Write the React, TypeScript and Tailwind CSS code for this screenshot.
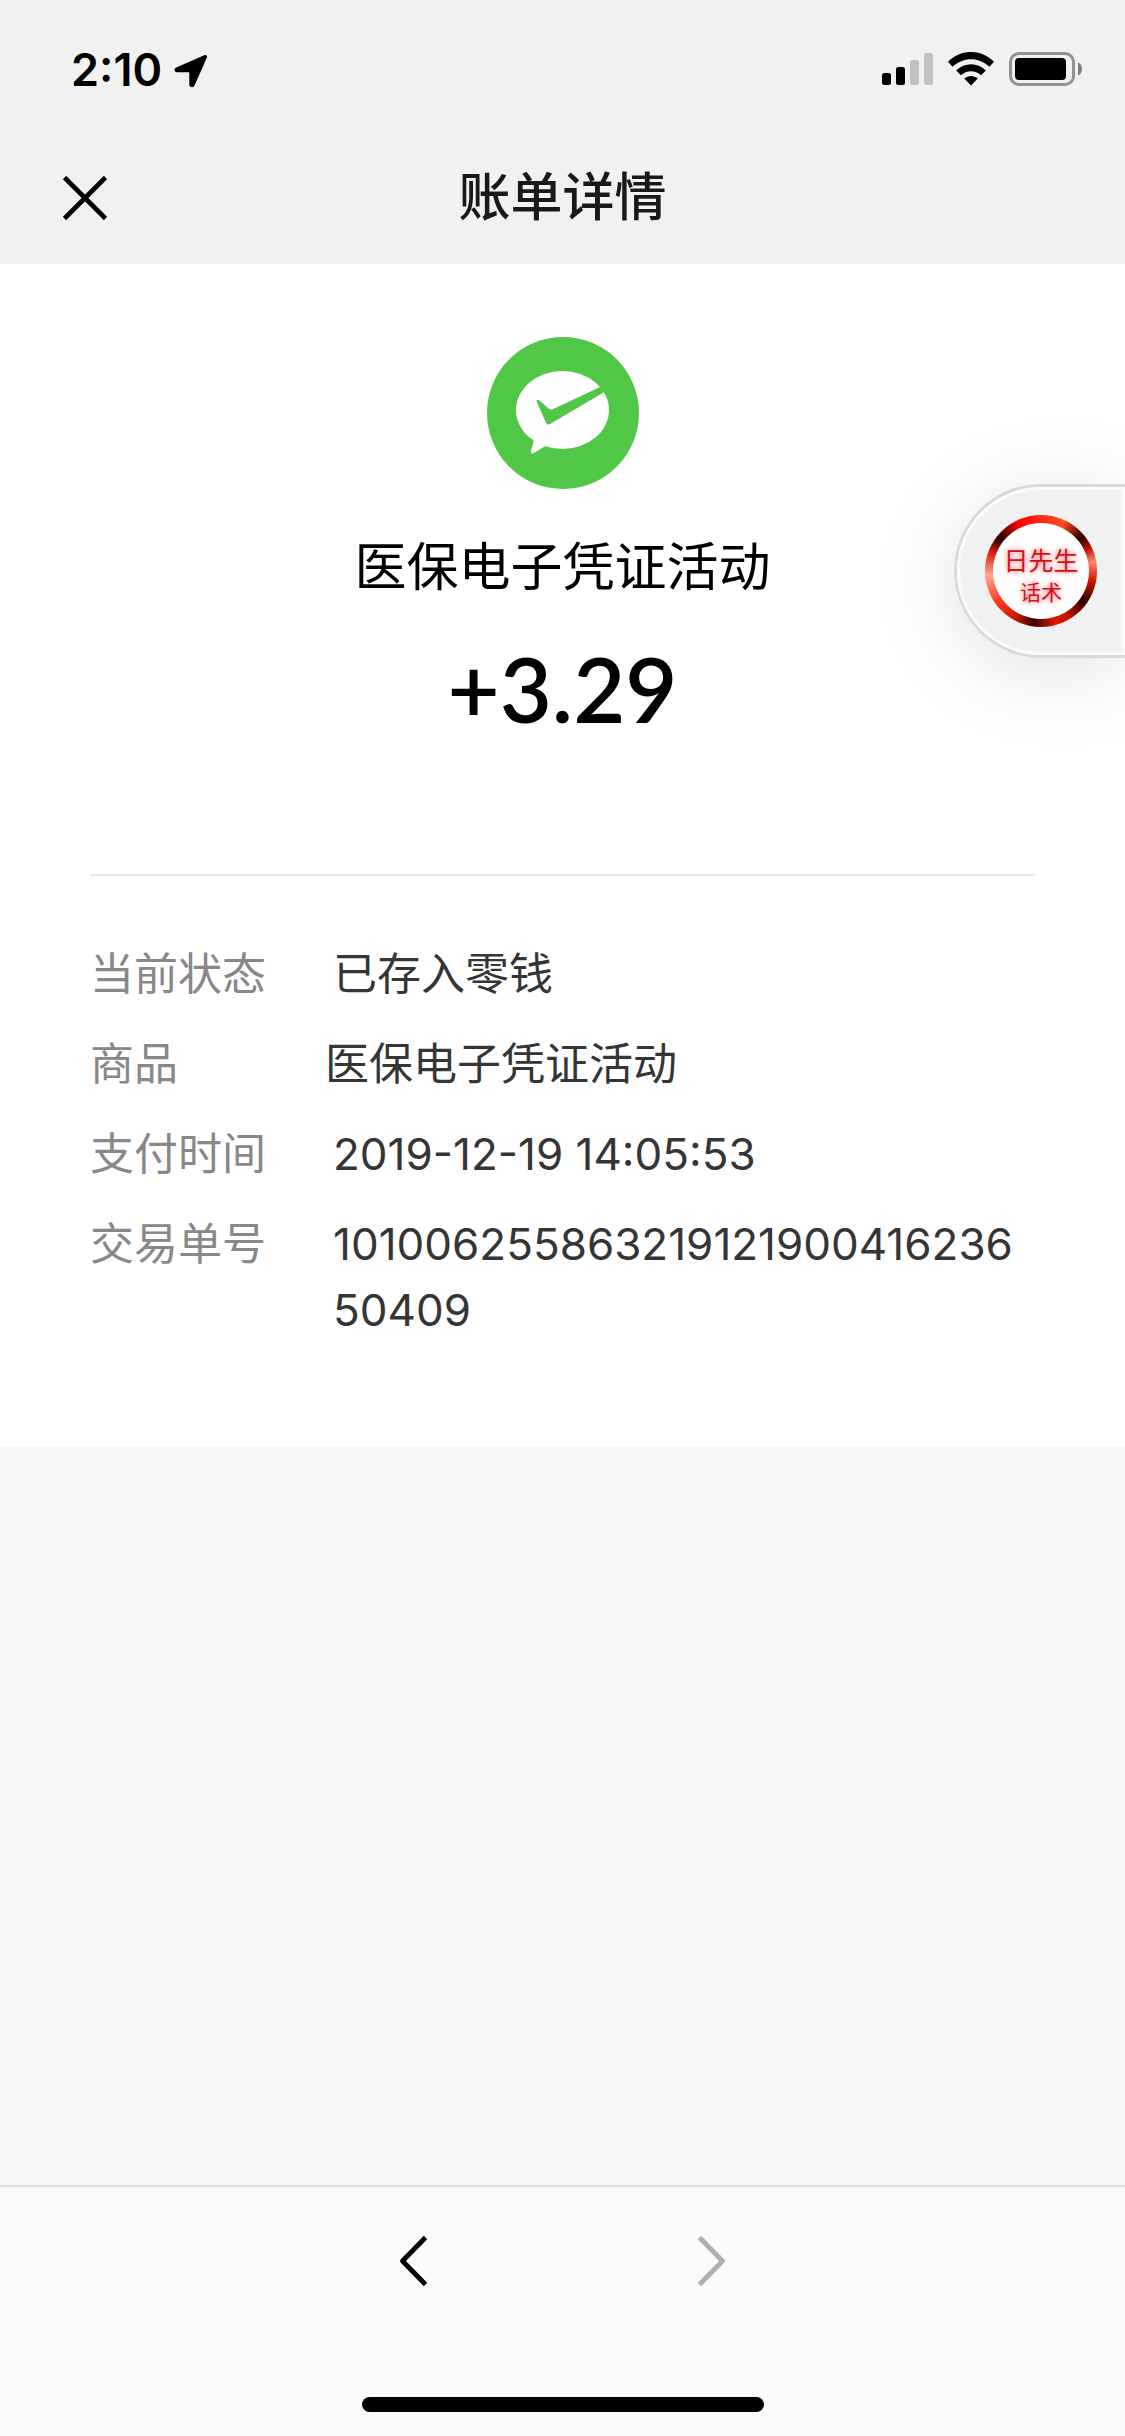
type BillRow = { label: string; value: string; tight?: boolean };

const rows: BillRow[] = [
  { label: "当前状态", value: "已存入零钱" },
  { label: "商品", value: "医保电子凭证活动", tight: true },
  { label: "支付时间", value: "2019-12-19 14:05:53" },
  { label: "交易单号", value: "10100625586321912190041623650409" },
];

function StatusBar() {
  return (
    <div className="flex h-[132px] items-center justify-between pt-1.5 pr-[42px] pl-[71px] text-black">
      <div className="flex items-center gap-3">
        <span className="text-[45px] leading-none font-semibold">2:10</span>
        <svg width="34" height="34" viewBox="0 0 34 34" className="mt-1">
          <path
            d="M2.200 13.600 30.200 1.200c1.900-.7 3.400.8 2.600 2.600L20.400 31.800c-1 2.200-5 1.700-5.100-1V18.200H3.200c-3.200-.1-3.600-3.400-1-4.600z"
            fill="currentColor"
          />
        </svg>
      </div>

      <div className="flex items-center gap-[15px]">
        {/* Signal */}
        <svg width="51" height="34" viewBox="0 0 51 34">
          <rect x="0" y="21" width="9" height="12" rx="2.5" />
          <rect x="14" y="15" width="9" height="18" rx="2.5" />
          <rect x="28" y="8" width="9" height="25" rx="2.5" fill="#c1c1c1" />
          <rect x="42" y="1" width="9" height="32" rx="2.5" fill="#c1c1c1" />
        </svg>
        {/* Wi-Fi */}
        <svg width="46" height="34" viewBox="0 0 46 34">
          <path d="M0 9.8C13-3.3 33-3.3 46 9.8l-4.6 4.9c-10.6-10-26.2-10-36.8 0z" />
          <path d="M8.2 18.4c8.4-8.2 21.200-8.200 29.600 0l-4.700 4.800c-5.800-5.400-14.400-5.400-20.200 0z" />
          <path d="M16.200 26.600c3.900-3.600 9.700-3.600 13.600 0L23 33.500z" />
        </svg>
        {/* Battery */}
        <svg width="74" height="34" viewBox="0 0 74 34">
          <rect x="1.500" y="1.500" width="63" height="31" rx="8.500" fill="none" stroke="#929292" strokeWidth="3" />
          <rect x="6" y="6" width="51" height="22" rx="4" />
          <path d="M69 10.500c5.400 2 5.400 11 0 13z" fill="#808080" />
        </svg>
      </div>
    </div>
  );
}

function TitleBar() {
  return (
    <div className="grid h-[132px] grid-cols-[1fr_auto_1fr] items-center px-[61px]">
      <button type="button" aria-label="关闭" className="w-12">
        <svg width="48" height="48" viewBox="0 0 48 48" stroke="#000" strokeWidth="4.600">
          <path d="M3.500 3.500 44.500 44.500M44.500 3.500 3.500 44.500" />
        </svg>
      </button>
      <h1 className="text-[52px] leading-none font-medium text-[#191919]">账单详情</h1>
    </div>
  );
}

function PayLogo() {
  return (
    <svg width="152" height="152" viewBox="0 0 152 152">
      <circle cx="76" cy="76" r="76" fill="#51c747" />
      <ellipse cx="75.500" cy="73" rx="46.500" ry="39" fill="#fff" />
      <path d="M46.500 102c.4 5-2.500 10-2.500 13 0 1.800 1.400 1.900 2.700 1L58.500 109z" fill="#fff" />
      <path
        d="M50 63c1-.8 2.200 0 3.500 1.300l8 7.200c1.400 1.200 3 1.300 4.800.5L112 50.500l8-4 3 6-5.500 2.500L63.500 86.700c-1.900 1.200-3.600.8-4.600-1.200L50 65.200c-.5-1-.5-1.700 0-2.200z"
        fill="#51c747"
      />
    </svg>
  );
}

// Minimised page that sticks to the right edge
function FloatingTab() {
  return (
    <button
      type="button"
      className="absolute top-[484px] right-0 h-[174px] w-[171px] rounded-l-full border-y-3 border-l-3 border-[#d9d9d9] shadow-[0_12px_90px_rgba(0,0,0,0.12)]"
    >
      <span className="flex h-full items-center rounded-l-full border-3 border-[#fafafa] bg-[#f1f1f1] pl-[25px]">
        <span className="flex size-28 rounded-full bg-[conic-gradient(#ff2a12,#ff4a20_25deg,#2a0000_50deg,#c01000_65deg,#ff8a70_80deg,#d01800_100deg,#300000_125deg,#c81400_150deg,#e01800_165deg,#400000_188deg,#d01800_210deg,#ff3a20_235deg,#ffa890_265deg,#e02010_290deg,#200000_308deg,#ff0000_335deg,#ff2a12)] p-2">
          <span className="flex flex-1 flex-col items-center justify-center rounded-full bg-[#fffdfd] pt-3 text-[#d01020] [text-shadow:0_0_4px_#ff9090,0_0_6px_#ffb0b0]">
            <span className="text-[25px] leading-8">日先生</span>
            <span className="text-[21px] leading-8">话术</span>
          </span>
        </span>
      </span>
    </button>
  );
}

export default function App() {
  return (
    <div className="relative flex min-h-screen flex-col overflow-hidden bg-[#f7f7f7] font-['Inter','Noto_Sans_CJK_SC',sans-serif]">
      <header className="bg-[#f1f1f1]">
        <StatusBar />
        <TitleBar />
      </header>

      <main className="bg-white px-[90px] pt-[73px] pb-[104px]">
        <section className="flex flex-col items-center border-b-2 border-[#e7e7e7] pb-[134px] text-black">
          <PayLogo />
          <h2 className="mt-[46px] text-[52px] leading-[66px] font-normal">医保电子凭证活动</h2>
          <p className="mt-[35px] font-['Lato'] text-[90px] leading-[104px] font-semibold">+3.29</p>
        </section>

        <dl className="flex flex-col gap-6 pt-[65px] text-[44px] leading-[66px]">
          {rows.map(row => (
            <div key={row.label} className="flex">
              <dt className={`${row.tight ? "w-[235px]" : "w-[243px]"} flex-shrink-0 text-[#888]`}>{row.label}</dt>
              <dd className="flex-1 break-all text-[#353535]">{row.value}</dd>
            </div>
          ))}
        </dl>
      </main>

      <footer className="mt-auto flex flex-col items-center border-t-2 border-[#dedfe0] bg-[#f9fafc] pt-[46px] pb-6">
        <nav className="flex gap-[268px]">
          <button type="button" aria-label="后退" className="text-black">
            <svg width="30" height="56" viewBox="0 0 30 56" fill="none" stroke="currentColor" strokeWidth="4.800">
              <path d="M26.500 4.500 3.500 28l23 23.500" strokeLinejoin="round" />
            </svg>
          </button>
          <button type="button" aria-label="前进" disabled className="text-[#b0b0b1]">
            <svg width="30" height="56" viewBox="0 0 30 56" fill="none" stroke="currentColor" strokeWidth="4.800">
              <path d="M2.500 4.500 25.500 28 2.500 51.500" strokeLinejoin="round" />
            </svg>
          </button>
        </nav>
        <div className="mt-[108px] h-[15px] w-[402px] rounded-full bg-black" />
      </footer>

      <FloatingTab />
    </div>
  );
}
